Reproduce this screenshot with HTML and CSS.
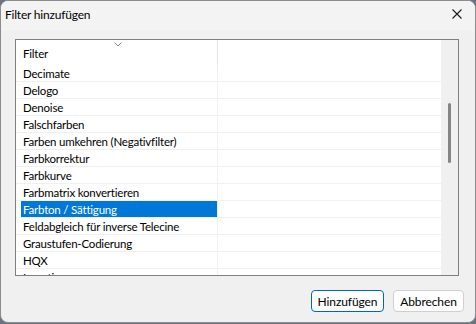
FILE: index.html
```html
<!DOCTYPE html>
<html lang="de">

<head>
  <meta charset="UTF-8">
  <title>Filter hinzufügen</title>
  <link rel="stylesheet" href="styles.css">
</head>

<body>
  <div class="dialog">
    <div class="titlebar">
      <span class="title">Filter hinzufügen</span>
      <button class="close" aria-label="Schließen">
        <svg width="10" height="10" viewBox="0 0 10 10">
          <path d="M0.5 0.5 L9.5 9.5 M9.5 0.5 L0.5 9.5" stroke="#1a1a1a" stroke-width="1.1" fill="none"/>
        </svg>
      </button>
    </div>

    <div class="body">
      <div class="listbox">
        <div class="list-main">
          <div class="list-header">
            <div class="head-name">
              <svg class="sort" width="8" height="5" viewBox="0 0 8 5">
                <path d="M0.5 0.5 L4 4 L7.5 0.5" stroke="#8a8a8a" stroke-width="1" fill="none"/>
              </svg>
              <span>Filter</span>
            </div>
            <div class="head-rest"></div>
          </div>

          <div class="rows">
            <div class="row"><div class="name"><span class="label">Decimate</span></div><div class="rest"></div></div>
            <div class="row"><div class="name"><span class="label">Delogo</span></div><div class="rest"></div></div>
            <div class="row"><div class="name"><span class="label">Denoise</span></div><div class="rest"></div></div>
            <div class="row"><div class="name"><span class="label">Falschfarben</span></div><div class="rest"></div></div>
            <div class="row"><div class="name"><span class="label">Farben umkehren (Negativfilter)</span></div><div class="rest"></div></div>
            <div class="row"><div class="name"><span class="label">Farbkorrektur</span></div><div class="rest"></div></div>
            <div class="row"><div class="name"><span class="label">Farbkurve</span></div><div class="rest"></div></div>
            <div class="row"><div class="name"><span class="label">Farbmatrix konvertieren</span></div><div class="rest"></div></div>
            <div class="row selected"><div class="name"><span class="label">Farbton / Sättigung</span></div><div class="rest"></div></div>
            <div class="row"><div class="name"><span class="label">Feldabgleich für inverse Telecine</span></div><div class="rest"></div></div>
            <div class="row"><div class="name"><span class="label">Graustufen-Codierung</span></div><div class="rest"></div></div>
            <div class="row"><div class="name"><span class="label">HQX</span></div><div class="rest"></div></div>
            <div class="row"><div class="name"><span class="label">Invertieren</span></div><div class="rest"></div></div>
          </div>
        </div>

        <div class="scrollbar">
          <div class="thumb"></div>
        </div>
      </div>

      <div class="buttons">
        <button class="btn btn-default">Hinzufügen</button>
        <button class="btn">Abbrechen</button>
      </div>
    </div>
  </div>
</body>

</html>
```

FILE: styles.css
```css
* {
  box-sizing: border-box;
  margin: 0;
  padding: 0;
}

body {
  font-family: Lato, 'Liberation Sans', sans-serif;
  font-size: 11.5px;
  letter-spacing: -0.2px;
  color: #000;
  background-color: #6b7384;
  width: 476px;
  height: 324px;
  overflow: hidden;
}

.dialog {
  width: 476px;
  height: 323px;
  border: 1px solid #8c8c8c;
  border-radius: 8px;
  background-color: #f0f0f0;
  display: flex;
  flex-direction: column;
  overflow: hidden;
}

.titlebar {
  height: 30px;
  flex: none;
  display: flex;
  align-items: center;
  justify-content: space-between;
  padding-left: 4px;
  background-color: #f3f3f3;
}

.title {
  font-size: 12px;
  line-height: 16px;
  margin-top: -2px;
}

.close {
  border: none;
  background: none;
  width: 46px;
  height: 30px;
  display: flex;
  align-items: center;
  justify-content: center;
  margin-top: -4px;
  padding-left: 10px;
}

.body {
  flex: 1;
  display: flex;
  flex-direction: column;
  padding: 8px 11px 0 14px;
}

.listbox {
  width: 444px;
  height: 237px;
  border: 1px solid #7f7f7f;
  background-color: #fff;
  display: flex;
  overflow: hidden;
}

.list-main {
  flex: 1;
  display: flex;
  flex-direction: column;
  overflow: hidden;
}

.list-header {
  height: 25px;
  flex: none;
  display: flex;
}

.head-name {
  position: relative;
  width: 201px;
  padding-left: 7px;
  padding-top: 1px;
  display: flex;
  align-items: center;
}

.sort {
  position: absolute;
  left: 98px;
  top: 2px;
}

.head-rest {
  flex: 1;
  border-left: 1px solid #e5e5e5;
}

.row {
  height: 17px;
  display: flex;
  border-bottom: 1px solid #f0f0f0;
  flex: none;
}

.name {
  width: 201px;
  padding-left: 5px;
  display: flex;
}

.label {
  flex: 1;
  padding: 1px 0 0 2px;
  line-height: 15px;
  white-space: nowrap;
}

.row.selected .label {
  background-color: #0078d7;
  color: #fff;
}

.rest {
  flex: 1;
  border-left: 1px solid #f0f0f0;
}

.scrollbar {
  width: 17px;
  flex: none;
  background-color: #f0f0f0;
  padding: 63px 0 0 7px;
}

.thumb {
  width: 3px;
  height: 60px;
  border-radius: 2px;
  background-color: #858585;
}

.buttons {
  display: flex;
  justify-content: flex-end;
  gap: 9px;
  margin-top: 14px;
}

.btn {
  height: 22px;
  width: 71px;
  font-family: inherit;
  font-size: 12px;
  letter-spacing: -0.1px;
  color: #000;
  background-color: #fdfdfd;
  border: 1px solid #d0d0d0;
  border-radius: 4px;
}

.btn-default {
  border-color: #0067c0;
  width: 73px;
}
```
